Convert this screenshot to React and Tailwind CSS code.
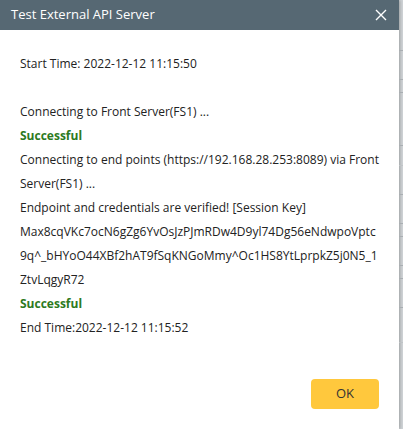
import React from 'react';

export default function App() {
  const lineas = [
    { texto: 'Connecting to Front Server(FS1) ...' },
    { texto: 'Successful', ok: true },
    { texto: 'Connecting to end points (https://192.168.28.253:8089) via Front Server(FS1) ...' },
    { texto: 'Endpoint and credentials are verified! [Session Key] Max8cqVKc7ocN6gZg6YvOsJzPJmRDw4D9yl74Dg56eNdwpoVptc9q^_bHYoO44XBf2hAT9fSqKNGoMmy^Oc1HS8YtLprpkZ5j0N5_1ZtvLqgyR72' },
    { texto: 'Successful', ok: true },
    { texto: 'End Time:2022-12-12 11:15:52' },
  ];

  return (
    <div className="w-[403px] h-[429px] flex bg-[#cfd3d6] overflow-hidden" style={{ fontFamily: '"Open Sans", "Noto Sans", sans-serif' }}>
      <div className="w-[399px] h-[429px] bg-white flex flex-col shrink-0 shadow-[1px_0_3px_rgba(0,0,0,0.25)]">
        <div className="h-[30px] bg-[#566873] flex items-center justify-between pl-[11px] pr-[12px] shrink-0">
          <span className="text-white text-[13px]">Test External API Server</span>
          <svg width="12" height="12" viewBox="0 0 12 12" className="text-white">
            <path d="M1 1L11 11M11 1L1 11" stroke="currentColor" strokeWidth="1.4" />
          </svg>
        </div>

        <div className="flex-1 pl-[20px] pr-[20px] pt-[22px] text-[12px] leading-[24px] text-[#222]">
          <div>Start Time: 2022-12-12 11:15:50</div>
          <div className="h-[24px]" />
          {lineas.map((l, i) => (
            <div key={i} className={`break-words ${l.ok ? 'font-bold text-[#2d7a1e]' : ''}`}>
              {l.texto}
            </div>
          ))}
        </div>

        <div className="flex justify-end pr-[20px] pb-[20px] shrink-0">
          <button className="w-[68px] h-[30px] rounded-[4px] bg-[#ffc83d] text-[#333] text-[13px]">OK</button>
        </div>
      </div>
      <div className="flex-1 flex flex-col">
        <div className="h-[51px] border-b border-[#a9aeb2]" />
        <div className="h-[29px] border-b border-[#a9aeb2]" />
        <div className="h-[13px] border-b border-[#a9aeb2]" />
        <div className="h-[53px] border-b border-[#a9aeb2]" />
        <div className="h-[20px] border-b border-[#bfc3c6]" />
        <div className="h-[29px] border-b border-[#a9aeb2]" />
        <div className="h-[29px] border-b border-[#a9aeb2]" />
        <div className="h-[13px] border-b border-[#a9aeb2]" />
        <div className="h-[29px] border-b border-[#a9aeb2]" />
        <div className="h-[13px] border-b border-[#a9aeb2]" />
        <div className="h-[29px] border-b border-[#a9aeb2]" />
        <div className="h-[35px] border-b border-[#bfc3c6]" />
      </div>
    </div>
  );
}
